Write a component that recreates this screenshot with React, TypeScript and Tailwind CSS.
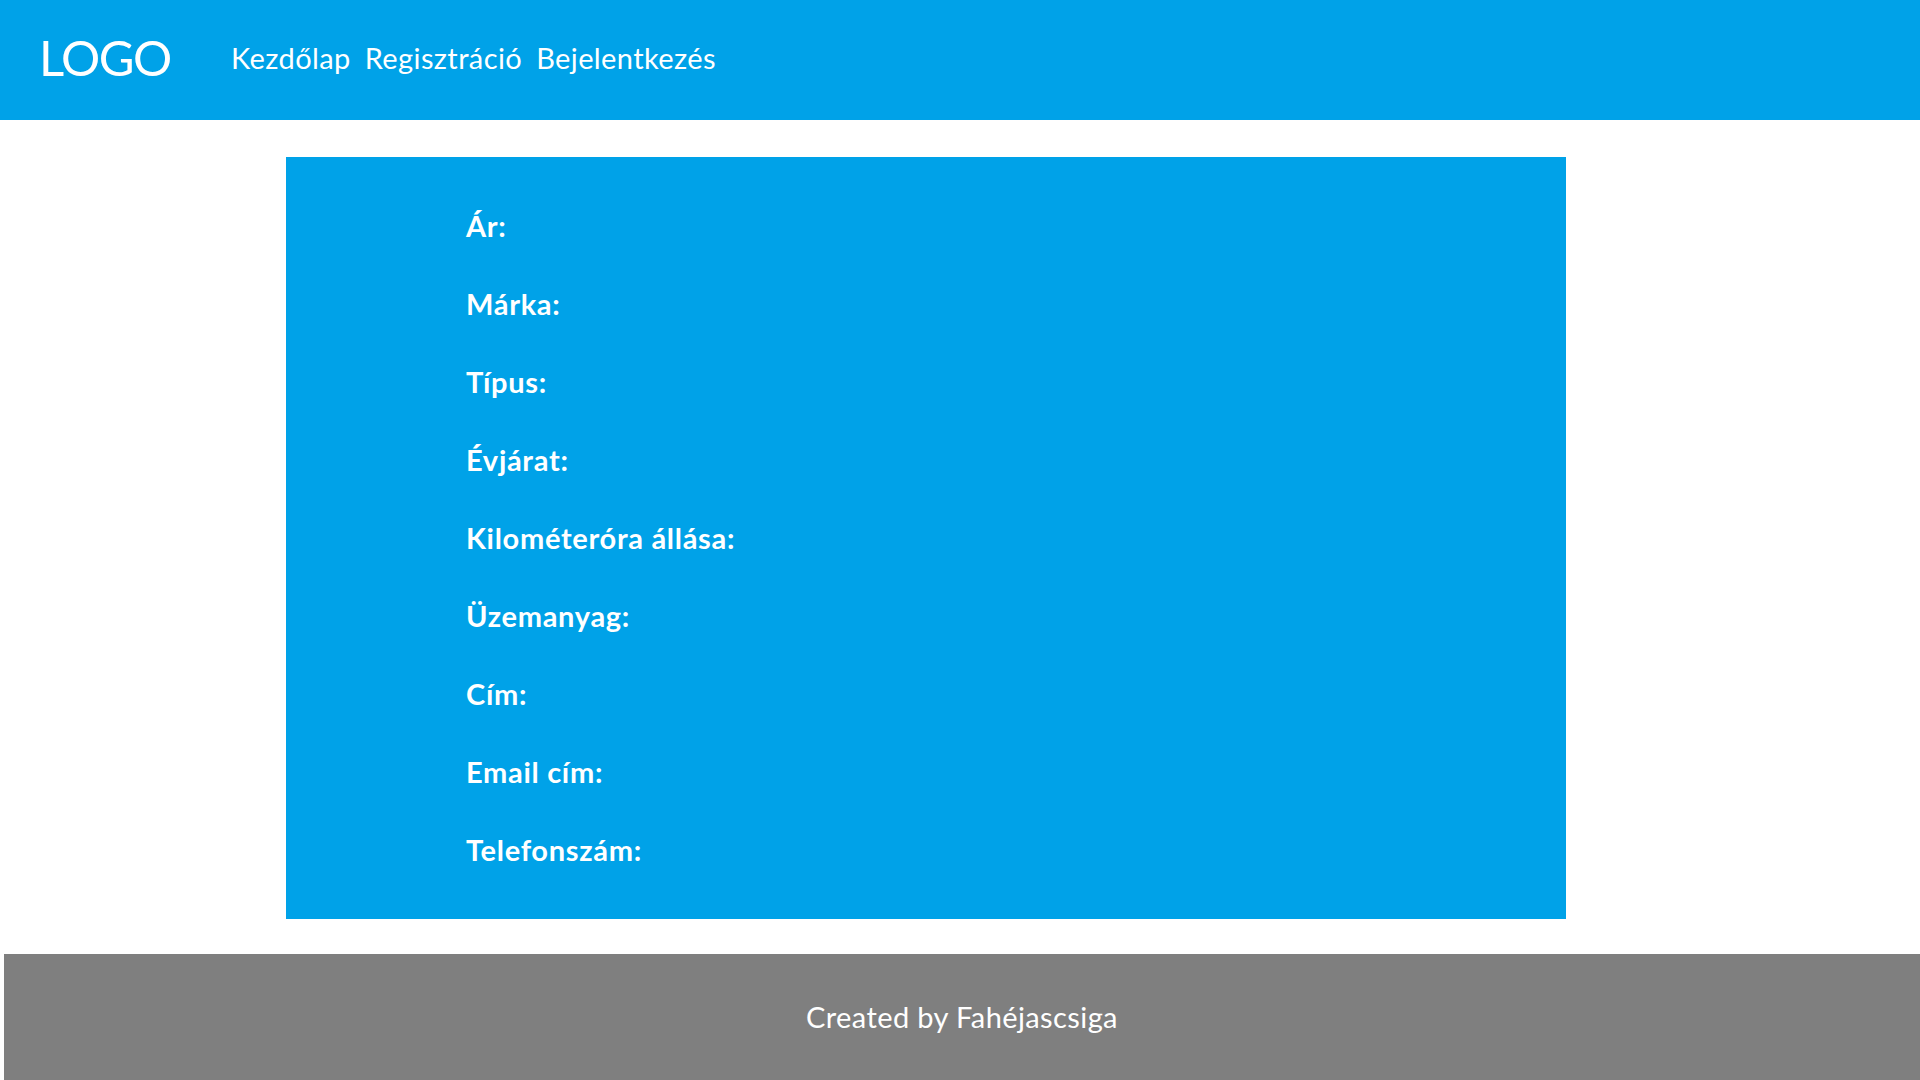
import React from "react";

const labels = [
  "Ár:",
  "Márka:",
  "Típus:",
  "Évjárat:",
  "Kilométeróra állása:",
  "Üzemanyag:",
  "Cím:",
  "Email cím:",
  "Telefonszám:",
];

export default function App() {
  return (
    <div className="w-[1920px] h-[1080px] bg-white overflow-hidden text-white font-['Lato','Liberation_Sans',sans-serif]">
      <header className="h-[120px] bg-[#00A2E8] flex items-start pl-[39px]">
        <span className="w-[192px] shrink-0 text-[49px] leading-[114px] tracking-[-1.5px]">LOGO</span>
        <nav className="flex gap-[14px] text-[29px] leading-[116px] tracking-[0.4px]">
          <a>Kezdőlap</a>
          <a>Regisztráció</a>
          <a>Bejelentkezés</a>
        </nav>
      </header>
      <main className="mt-[37px] ml-[286px] w-[1280px] h-[762px] bg-[#00A2E8] pt-[30px] pl-[180px]">
        {labels.map((l) => (
          <div key={l} className="h-[78px] leading-[78px] text-[29px] font-bold tracking-[0.7px]">
            {l}
          </div>
        ))}
      </main>
      <footer className="mt-[35px] ml-[4px] h-[126px] bg-[#7F7F7F] flex items-center justify-center text-[29px] tracking-[0.4px]">
        Created by Fahéjascsiga
      </footer>
    </div>
  );
}
